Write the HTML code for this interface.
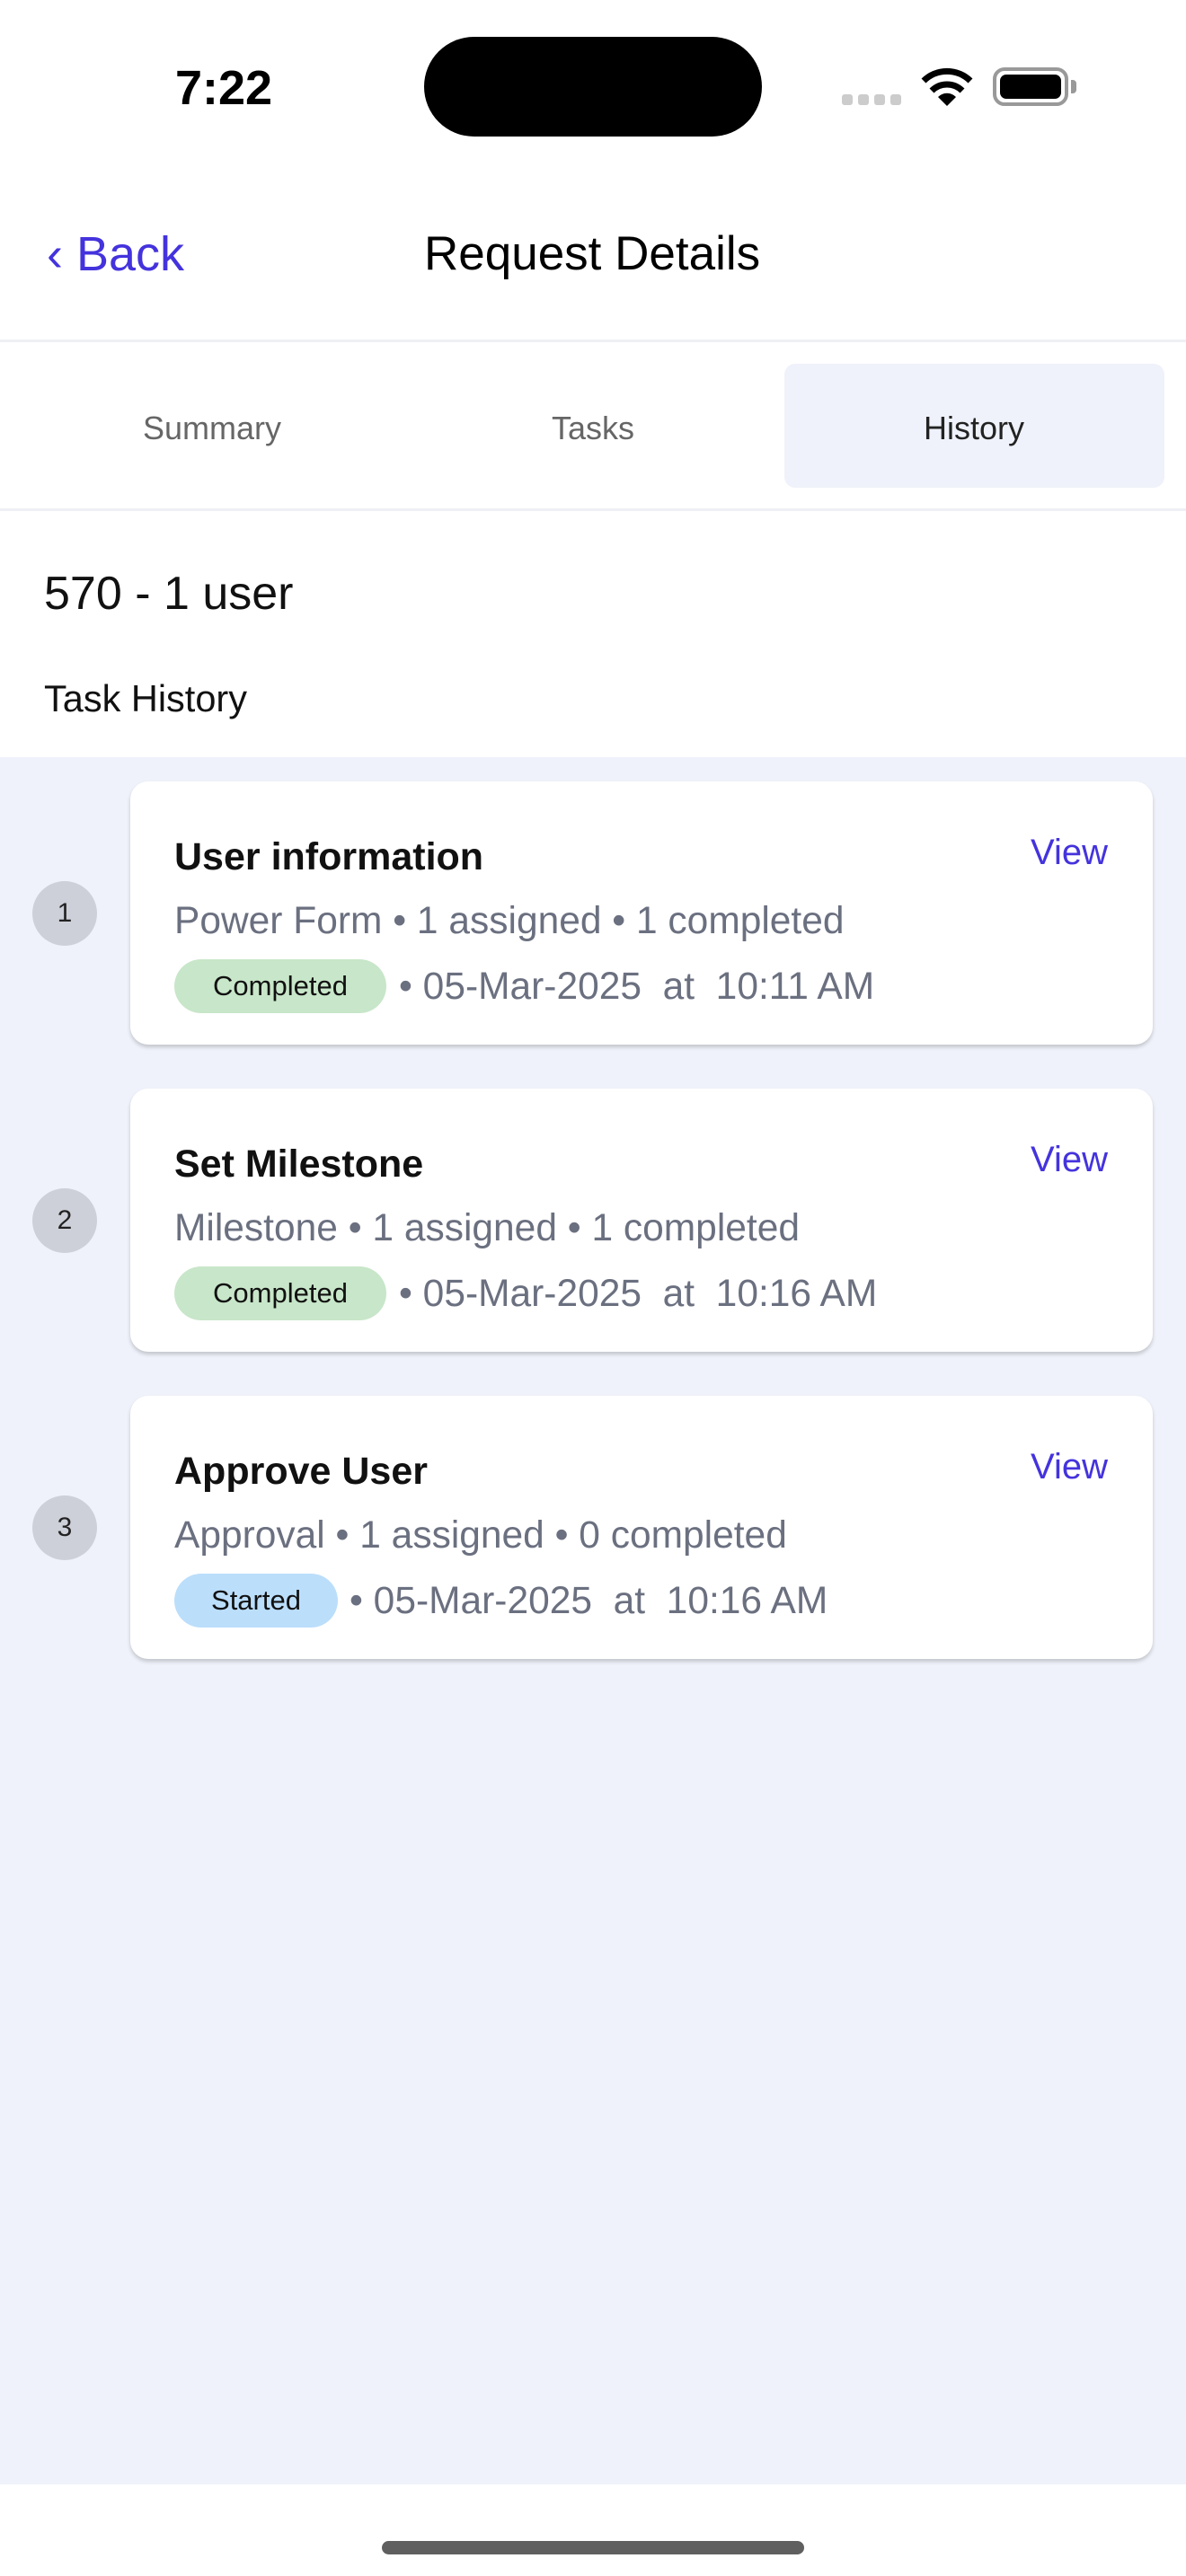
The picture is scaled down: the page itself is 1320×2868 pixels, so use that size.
<!DOCTYPE html>
<html><head><meta charset="utf-8">
<style>
*{margin:0;padding:0;box-sizing:border-box}
body{width:1320px;height:2868px;position:relative;background:#fff;font-family:"Liberation Sans",sans-serif;overflow:hidden}
.a{position:absolute;white-space:nowrap}
.card{position:absolute;left:145px;width:1138px;height:293px;background:#fff;border-radius:20px;box-shadow:0 3px 4px rgba(0,0,0,0.18)}
.num{position:absolute;left:36px;width:72px;height:72px;border-radius:50%;background:#cdd0d8;color:#222;font-size:30px;line-height:72px;text-align:center}
.t{position:absolute;left:49px;font-size:43px;font-weight:bold;color:#111;line-height:50px}
.s{position:absolute;left:49px;font-size:42.5px;color:#6b7080;line-height:50px}
.v{position:absolute;left:1002px;font-size:40px;color:#4433dd;line-height:50px}
.b{position:absolute;left:49px;height:60px;border-radius:30px;font-size:31px;color:#111;line-height:60px;text-align:center}
.d{position:absolute;font-size:42.5px;color:#6b7080;line-height:50px}
</style></head><body>
<div class="a" style="left:195px;top:67px;font-size:54px;font-weight:bold;line-height:62px;color:#000">7:22</div>
<div class="a" style="left:472px;top:41px;width:376px;height:111px;border-radius:56px;background:#000"></div>
<div class="a" style="left:937px;top:105px;width:12px;height:12px;border-radius:3px;background:#ccc"></div>
<div class="a" style="left:955px;top:105px;width:12px;height:12px;border-radius:3px;background:#ccc"></div>
<div class="a" style="left:973px;top:105px;width:12px;height:12px;border-radius:3px;background:#ccc"></div>
<div class="a" style="left:991px;top:105px;width:12px;height:12px;border-radius:3px;background:#ccc"></div>
<svg class="a" style="left:1024px;top:74px" width="60" height="44" viewBox="0 0 60 44">
<path d="M30 44 L20 34 A14 14 0 0 1 40 34 Z" fill="#000"/>
<path d="M13 27 A24 24 0 0 1 47 27" stroke="#000" stroke-width="7" fill="none"/>
<path d="M4 16 A37 37 0 0 1 56 16" stroke="#000" stroke-width="7" fill="none"/>
</svg>
<div class="a" style="left:1105px;top:75px;width:84px;height:43px;border:4px solid #999;border-radius:13px"></div>
<div class="a" style="left:1113px;top:83px;width:68px;height:27px;border-radius:7px;background:#000"></div>
<div class="a" style="left:1192px;top:89px;width:6px;height:15px;border-radius:0 4px 4px 0;background:#999"></div>

<div class="a" style="left:52px;top:252px;font-size:54px;line-height:62px;color:#4433dd">‹ Back</div>
<div class="a" style="left:472px;top:252px;font-size:53px;line-height:62px;color:#000">Request Details</div>
<div class="a" style="left:0;top:378px;width:1320px;height:3px;background:#eef0f5"></div>
<div class="a" style="left:873px;top:405px;width:423px;height:138px;border-radius:12px;background:#eff2fa"></div>
<div class="a" style="left:0;top:455px;width:472px;text-align:center;font-size:36px;line-height:44px;color:#666">Summary</div>
<div class="a" style="left:424px;top:455px;width:472px;text-align:center;font-size:36px;line-height:44px;color:#666">Tasks</div>
<div class="a" style="left:848px;top:455px;width:472px;text-align:center;font-size:36px;line-height:44px;color:#222">History</div>
<div class="a" style="left:0;top:566px;width:1320px;height:3px;background:#eef0f5"></div>
<div class="a" style="left:49px;top:631px;font-size:52px;line-height:60px;color:#111">570 - 1 user</div>
<div class="a" style="left:49px;top:753px;font-size:41.5px;line-height:50px;color:#111">Task History</div>

<div class="a" style="left:0;top:843px;width:1320px;height:1923px;background:#eff2fa"></div>

<div class="num" style="top:981px">1</div>
<div class="card" style="top:870px">
<div class="t" style="top:59px">User information</div>
<div class="v" style="top:54px">View</div>
<div class="s" style="top:131px">Power Form • 1 assigned • 1 completed</div>
<div class="b" style="top:198px;width:236px;background:#c8e6c9">Completed</div>
<div class="d" style="left:299px;top:204px">• 05-Mar-2025 &nbsp;at &nbsp;10:11 AM</div>
</div>

<div class="num" style="top:1323px">2</div>
<div class="card" style="top:1212px">
<div class="t" style="top:59px">Set Milestone</div>
<div class="v" style="top:54px">View</div>
<div class="s" style="top:131px">Milestone • 1 assigned • 1 completed</div>
<div class="b" style="top:198px;width:236px;background:#c8e6c9">Completed</div>
<div class="d" style="left:299px;top:204px">• 05-Mar-2025 &nbsp;at &nbsp;10:16 AM</div>
</div>

<div class="num" style="top:1665px">3</div>
<div class="card" style="top:1554px">
<div class="t" style="top:59px">Approve User</div>
<div class="v" style="top:54px">View</div>
<div class="s" style="top:131px">Approval • 1 assigned • 0 completed</div>
<div class="b" style="top:198px;width:182px;background:#bbdefb">Started</div>
<div class="d" style="left:244px;top:204px">• 05-Mar-2025 &nbsp;at &nbsp;10:16 AM</div>
</div>

<div class="a" style="left:425px;top:2829px;width:470px;height:15px;border-radius:8px;background:#5f5f5f"></div>
</body></html>
